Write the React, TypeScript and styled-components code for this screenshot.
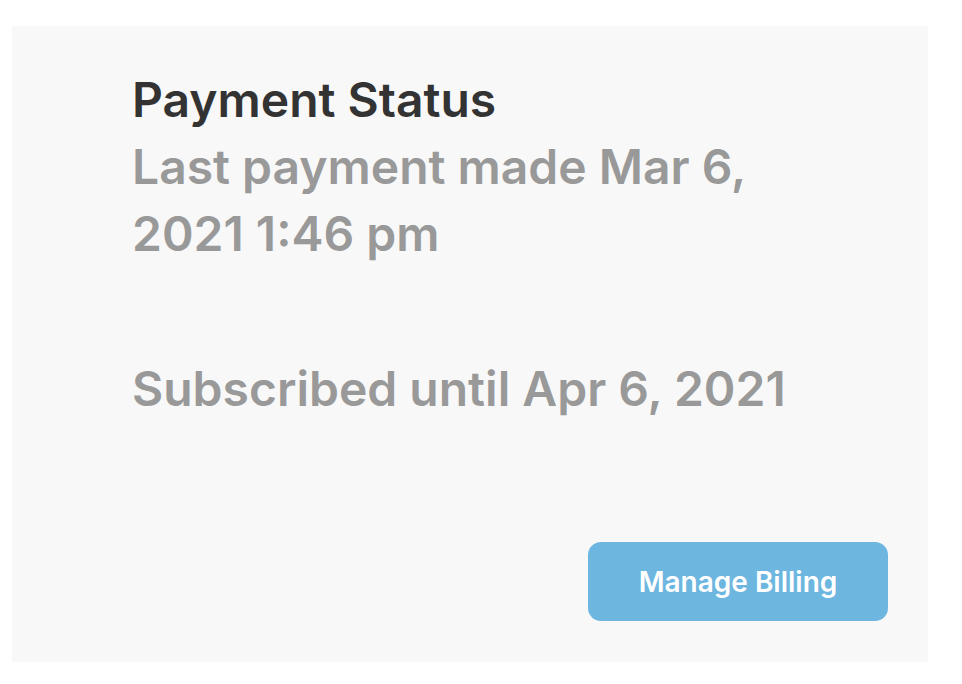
import React from "react";
import styled, { createGlobalStyle } from "styled-components";

const GlobalStyle = createGlobalStyle`
  html, body {
    margin: 0;
    padding: 0;
    background: #ffffff;
  }
  body {
    font-family: Inter, "Noto Sans", "Liberation Sans", sans-serif;
  }
`;

const Page = styled.div`
  padding: 26px 34px 22px 12px;
`;

const Card = styled.section`
  box-sizing: border-box;
  height: 636px;
  background: #f8f8f8;
  padding: 40px 40px 41px 120px;
  display: flex;
  flex-direction: column;
`;

const Info = styled.div`
  max-width: 690px;
  flex: 1;
`;

const Title = styled.h2`
  margin: 0;
  font-size: 48px;
  line-height: 67px;
  font-weight: 600;
  color: #333333;
`;

const Line = styled.p<{ $gap?: number }>`
  margin: ${(p) => p.$gap ?? 0}px 0 0;
  font-size: 48px;
  line-height: 67px;
  font-weight: 600;
  color: #999999;
`;

const Footer = styled.div`
  display: flex;
  justify-content: flex-end;
`;

const BillingButton = styled.button`
  width: 300px;
  height: 79px;
  border: none;
  border-radius: 13px;
  background: #6db6e0;
  color: #ffffff;
  font-family: inherit;
  font-size: 28px;
  font-weight: 600;
  cursor: pointer;
`;

export default function App() {
  return (
    <Page>
      <GlobalStyle />
      <Card>
        <Info>
          <Title>Payment Status</Title>
          <Line>Last payment made Mar 6, 2021 1:46 pm</Line>
          <Line $gap={88}>Subscribed until Apr 6, 2021</Line>
        </Info>
        <Footer>
          <BillingButton type="button">Manage Billing</BillingButton>
        </Footer>
      </Card>
    </Page>
  );
}
